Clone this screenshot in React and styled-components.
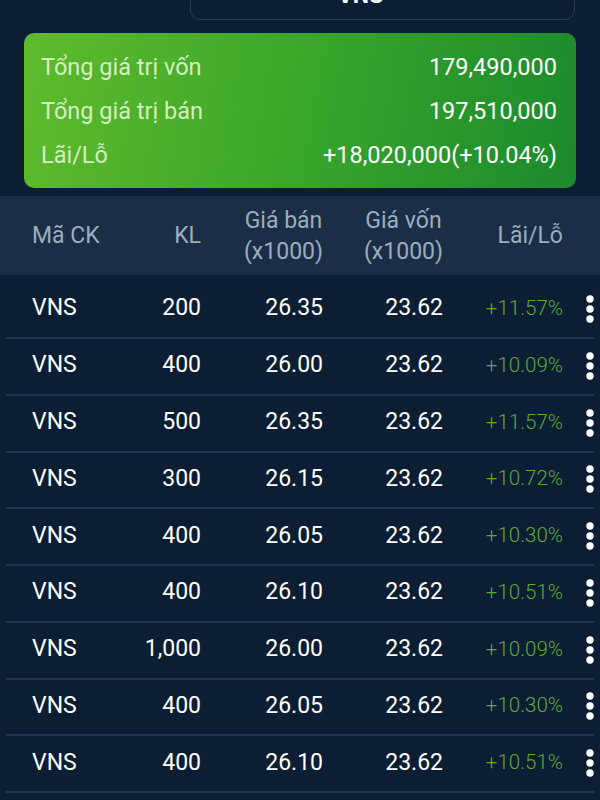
import React from "react";
import styled, { createGlobalStyle } from "styled-components";

const rows = [
  { code: "VNS", qty: "200", sell: "26.35", cost: "23.62", pl: "+11.57%" },
  { code: "VNS", qty: "400", sell: "26.00", cost: "23.62", pl: "+10.09%" },
  { code: "VNS", qty: "500", sell: "26.35", cost: "23.62", pl: "+11.57%" },
  { code: "VNS", qty: "300", sell: "26.15", cost: "23.62", pl: "+10.72%" },
  { code: "VNS", qty: "400", sell: "26.05", cost: "23.62", pl: "+10.30%" },
  { code: "VNS", qty: "400", sell: "26.10", cost: "23.62", pl: "+10.51%" },
  { code: "VNS", qty: "1,000", sell: "26.00", cost: "23.62", pl: "+10.09%" },
  { code: "VNS", qty: "400", sell: "26.05", cost: "23.62", pl: "+10.30%" },
  { code: "VNS", qty: "400", sell: "26.10", cost: "23.62", pl: "+10.51%" },
];

// 3 chấm dọc
const MoreIcon = () => (
  <svg width="8" height="28" viewBox="0 0 8 28">
    <circle cx="4" cy="4" r="3.7" fill="#fff" />
    <circle cx="4" cy="14" r="3.7" fill="#fff" />
    <circle cx="4" cy="24" r="3.7" fill="#fff" />
  </svg>
);

const App = () => {
  return (
    <>
      <GlobalStyle />
      <StPage>
        <StTop>
          <StSelect>VNS</StSelect>
        </StTop>

        <StSummary>
          <StSumRow>
            <StSumLabel>Tổng giá trị vốn</StSumLabel>
            <StSumValue>179,490,000</StSumValue>
          </StSumRow>
          <StSumRow>
            <StSumLabel>Tổng giá trị bán</StSumLabel>
            <StSumValue>197,510,000</StSumValue>
          </StSumRow>
          <StSumRow>
            <StSumLabel>Lãi/Lỗ</StSumLabel>
            <StSumValue>+18,020,000(+10.04%)</StSumValue>
          </StSumRow>
        </StSummary>

        <StHead>
          <StHeadCell>Mã CK</StHeadCell>
          <StHeadCell $right>KL</StHeadCell>
          <StHeadCell $right>
            <span>
              Giá bán
              <br />
              (x1000)
            </span>
          </StHeadCell>
          <StHeadCell $right>
            <span>
              Giá vốn
              <br />
              (x1000)
            </span>
          </StHeadCell>
          <StHeadCell $right>Lãi/Lỗ</StHeadCell>
        </StHead>

        {rows.map((r, i) => (
          <StRow key={i} $first={i === 0}>
            <StCell>{r.code}</StCell>
            <StCell $right>{r.qty}</StCell>
            <StCell $right>{r.sell}</StCell>
            <StCell $right>{r.cost}</StCell>
            <StPercent>{r.pl}</StPercent>
            <StMore>
              <MoreIcon />
            </StMore>
          </StRow>
        ))}
      </StPage>
    </>
  );
};

export default App;

const GlobalStyle = createGlobalStyle`
  body {
    margin: 0;
    background-color: #0b1e34;
    font-family: Roboto, "Noto Sans", "Liberation Sans", sans-serif;
  }
`;

const StPage = styled.div`
  width: 600px;
  height: 800px;
  overflow: hidden;
  background-color: #0b1e34;
`;

const StTop = styled.div`
  display: flex;
  justify-content: flex-end;
  padding-right: 25px;
  margin-top: -29px;
`;

const StSelect = styled.div`
  width: 385px;
  height: 49px;
  box-sizing: border-box;
  border: 1.5px solid #2a3e56;
  border-radius: 10px;

  display: flex;
  align-items: center;
  justify-content: center;
  padding-right: 44px;

  color: #fff;
  font-size: 23px;
  font-weight: 700;
`;

const StSummary = styled.div`
  margin: 13px 24px 0;
  height: 155px;
  box-sizing: border-box;
  padding: 12px 19px 11px 17px;
  border-radius: 10px;

  background: linear-gradient(100deg, #5fbb2c 0%, #3ea82b 45%, #1b8a2d 100%);
`;

const StSumRow = styled.div`
  display: flex;
  align-items: center;
  justify-content: space-between;
  height: 44px;
`;

const StSumLabel = styled.span`
  color: #d6eec2;
  font-size: 23.5px;
`;

const StSumValue = styled.span`
  color: #fff;
  font-size: 23.5px;
`;

const StGrid = styled.div`
  display: grid;
  grid-template-columns: 98px 71px 122px 120px 120px 1fr;
  align-items: center;
  padding-left: 32px;
`;

const StHead = styled(StGrid)`
  margin-top: 8px;
  height: 79px;
  background-color: #1a2f47;
`;

const StHeadCell = styled.div`
  display: flex;
  justify-content: ${(p) => (p.$right ? "flex-end" : "flex-start")};
  color: #9cadbf;
  font-size: 23px;
  line-height: 31px;

  span {
    text-align: center;
  }
`;

const StRow = styled(StGrid)`
  margin: 0 6px;
  padding-left: 26px;
  height: ${(p) => (p.$first ? "64px" : "56.75px")};
  box-sizing: border-box;
  padding-top: ${(p) => (p.$first ? "6px" : "0")};
  padding-bottom: 3px;
  border-bottom: 2px solid #1f3750;
`;

const StCell = styled.div`
  color: #fff;
  font-size: 23px;
  text-align: ${(p) => (p.$right ? "right" : "left")};
`;

const StPercent = styled.div`
  color: #5ea935;
  font-size: 20.5px;
  font-weight: 300;
  text-align: right;
`;

const StMore = styled.div`
  display: flex;
  padding-left: 23px;
  padding-top: 2px;
`;
